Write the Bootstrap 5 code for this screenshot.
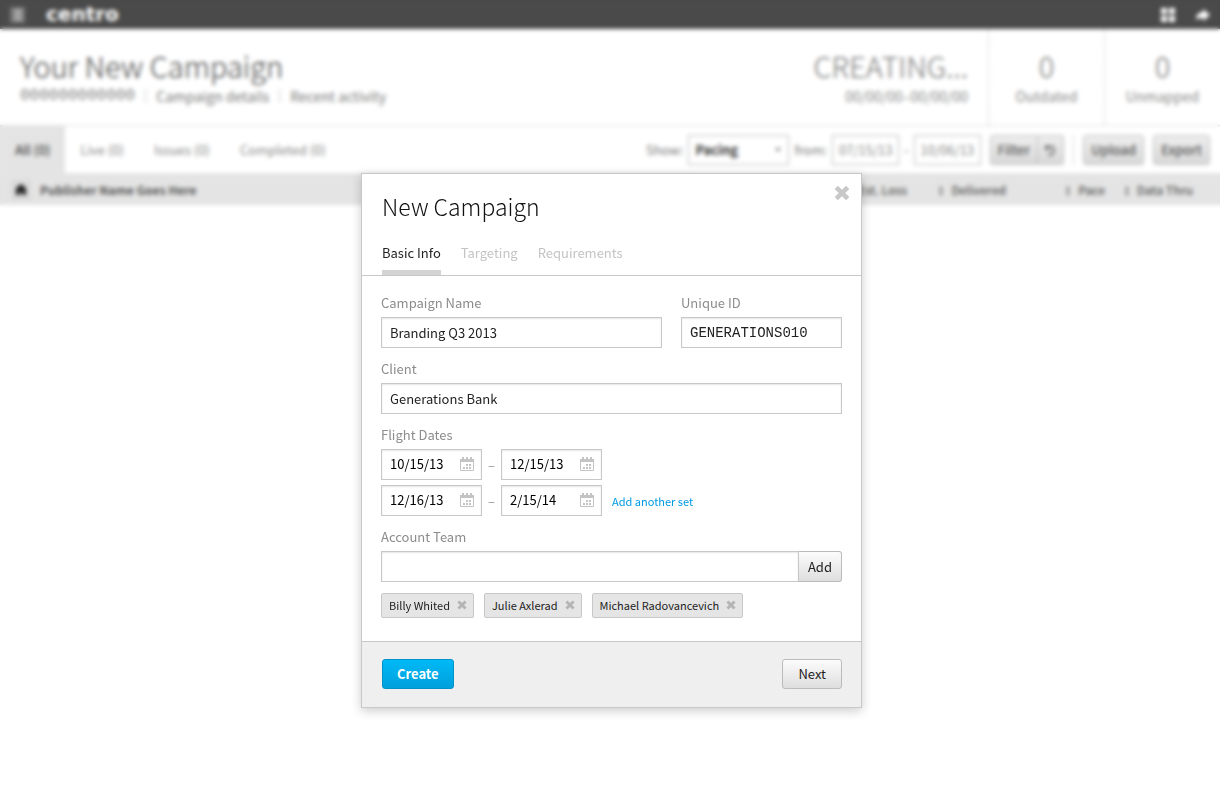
<!DOCTYPE html>
<html lang="en">
<head>
<meta charset="utf-8">
<meta name="viewport" content="width=device-width, initial-scale=1">
<title>New Campaign – centro</title>
<link href="https://cdn.jsdelivr.net/npm/bootstrap@5.3.0/dist/css/bootstrap.min.css" rel="stylesheet">
<style>
  body { font-family: "Noto Sans CJK SC", "Open Sans", sans-serif; font-size: 13px; line-height: 20px; color: #222; background: #fff; }
  button, input, select { font-family: inherit; }
  svg { display: block; flex: none; }

  /* Page behind the dialog */
  .topbar { height: 29px; background: #4a4a4a; padding: 0 10px; color: #fff; gap: 21px; }
  .brand { font: bold 20px/29px "DejaVu Sans", sans-serif; color: #fff; text-decoration: none; }
  .topbar button { background: none; border: 0; padding: 0; color: #fff; }
  .topbar .tools { gap: 20px; }
  .page-head { border-bottom: 1px dashed #ccc; min-height: 97px; }
  .head-main { padding: 18px 20px 0; }
  .big { font-size: 29px; line-height: 36px; font-weight: 300; color: #444; margin: 0; }
  .big.pale { color: #777; }
  .sub { font-size: 14px; line-height: 26px; color: #888; font-weight: 400; }
  .sub .strong { font-weight: 500; }
  .sub a { color: #777; text-decoration: none; }
  .sub .code { font-family: "Liberation Mono", monospace; font-size: 16px; line-height: 26px; }
  .sub a + a, .sub .code + a { border-left: 1px solid #ccc; padding-left: 10px; }
  .sub a, .sub .code { padding-right: 10px; }
  .stat { width: 116px; padding-top: 18px; border-left: 1px dashed #ccc; text-align: center; }
  .toolbar { min-height: 47px; padding-right: 10px; }
  .toolbar .tab { display: flex; align-items: center; padding: 0 15px; height: 47px; color: #888; text-decoration: none; }
  .toolbar .tab.active { background: #e4e4e4; color: #444; font-weight: 500; }
  .toolbar form { gap: 5px; color: #777; }
  .ctl { height: 30px; font-size: 13px; border: 1px solid #bbb; background: #fff; padding: 0 6px; }
  .ctl.date { width: 67px; color: #888; }
  .ctl.pick { width: 101px; color: #333; font-weight: 700; appearance: none; }
  .pick-wrap svg { position: absolute; right: 8px; top: 13px; }
  .toolbar .pushbtn { padding: 0 7px; font-weight: 500; color: #555; background: linear-gradient(#eee, #d8d8d8); }
  .grid-head { font-size: 12px; background: #e4e4e4; }
  .grid-head th { font-weight: 500; height: 32px; color: #555; text-align: right; padding: 1px 0 0; white-space: nowrap; }
  .grid-head th:first-child { text-align: left; padding-left: 11px; font-weight: 700; }
  .grid-head th:last-child { width: 115px; padding-right: 27px; }
  .grid-head .home { background: #dadada; padding: 3px; margin-right: 9px; }
  .w-col { width: 99px; }

  /* Shared push button */
  .pushbtn { height: 30px; border: 1px solid #bbb; border-radius: 3px; background: linear-gradient(#fcfcfc, #dedede); color: #222; font-size: 13px; font-weight: 400; line-height: 20px; padding: 0 15px; }
  .pushbtn.primary { color: #fff; font-weight: 700; padding: 0 14px; border-color: #0093c9; background: linear-gradient(#00b9f7, #00a0db); }
  .pushbtn.add { height: 31px; padding: 0 9px; border-left: 0; border-radius: 0 3px 3px 0; }

  /* Dialog */
  .veil { backdrop-filter: blur(2px); padding-left: 3px; }
  .veil .modal-dialog { max-width: 501px; margin: 173px auto 24px; }
  .veil .modal-content { border: 1px solid #c8c8c8; border-radius: 0; box-shadow: 0 3px 10px rgba(0, 0, 0, .2); color: #222; }
  .dlg-head { padding: 14px 20px 0; border-bottom: 1px solid #c8c8c8; }
  .dlg-title { font-size: 23px; line-height: 36px; font-weight: 300; margin: 0 0 19px; color: #111; }
  .close-x { position: absolute; right: 11px; top: 11px; border: 0; background: none; padding: 0; color: #c8c8c8; }
  .steps { gap: 20px; }
  .steps a { color: #c4c4c4; text-decoration: none; height: 32px; line-height: 20px; border-bottom: 5px solid transparent; }
  .steps a.active { color: #222; border-bottom-color: #d4d4d4; }
  .dlg-body { padding: 17px 19px 23px; }
  .group { margin-bottom: 11px; }
  .two-up { gap: 19px; }
  .cap { display: block; color: #8c8c8c; font-size: 13px; line-height: 20px; margin: 0 0 4px; padding: 0; float: none; width: auto; }
  .field { height: 31px; border: 1px solid #c8c8c8; background: #fff; box-shadow: inset 0 1px 2px rgba(0, 0, 0, .1); padding: 0 8px 1px; font-size: 13px; color: #222; border-radius: 0; }
  .field.mono { font-family: "Liberation Mono", monospace; font-size: 14px; padding-bottom: 0; }
  .uid { width: 161px; }
  .dates { display: grid; gap: 5px; }
  .datebox { width: 101px; padding-right: 7px; }
  .datebox input { border: 0; background: none; padding: 0; width: 66px; color: #000; outline: 0; }
  .dash { width: 19px; text-align: center; color: #999; }
  .small-link { font-size: 11px; color: #0099e5; text-decoration: none; margin-left: 10px; }
  .people { gap: 10px; }
  .person { height: 25px; border: 1px solid #c8c8c8; border-radius: 2px; background: #e5e5e5; font-size: 11px; padding: 0 6px 1px 7px; gap: 7px; }
  .person button { border: 0; background: none; padding: 0; color: #b4b4b4; }
  .dlg-foot { background: #efefef; border-top: 1px solid #c8c8c8; padding: 17px 19px 18px 20px; }
</style>
</head>
<body>
<svg width="0" height="0" class="position-absolute" aria-hidden="true">
  <symbol id="i-x" viewBox="0 0 14 14"><path d="M2 2l10 10M12 2L2 12" stroke="currentColor" stroke-width="4" fill="none"/></symbol>
  <symbol id="i-cal" viewBox="0 0 14 14"><path d="M0.500 2.500h13v11h-13z" fill="none" stroke="#c4c4c4"/><path d="M0 2h14v3H0zM2 0h2v3H2zM6 0h2v3H6zM10 0h2v3h-2z" fill="#c4c4c4"/><path d="M6 7h2v2H6zM9 7h2v2H9zM3 10h2v2H3zM6 10h2v2H6zM9 10h2v2H9z" fill="#c4c4c4"/></symbol>
  <symbol id="i-sort" viewBox="0 0 4 10"><path d="M2 0l2 4H0zM2 10l2-4H0z" fill="#666"/></symbol>
</svg>

<header class="topbar d-flex align-items-center">
  <button type="button" aria-label="Menu"><svg width="15" height="16" viewBox="0 0 15 16"><rect width="15" height="16" fill="#777"/><path d="M4 4h8M4 8h8M4 12h8" stroke="#ccc" stroke-width="2"/></svg></button>
  <a class="brand" href="#">centro</a>
  <div class="tools d-flex align-items-center ms-auto">
    <button type="button" aria-label="Apps"><svg width="16" height="16" viewBox="0 0 16 16" fill="#fff"><path d="M1 1h6v6H1zM9 1h6v6H9zM1 9h6v6H1zM9 9h6v6H9z"/></svg></button>
    <button type="button" aria-label="Share"><svg width="14" height="12" viewBox="0 0 14 12" fill="#fff"><path d="M0 11c0-6 4-8 7-8V0l7 6-7 6V9C4 9 2 9 0 11z"/></svg></button>
  </div>
</header>

<main>
  <section class="page-head d-flex">
    <div class="head-main">
      <h1 class="big">Your New Campaign</h1>
      <div class="sub d-flex align-items-center">
        <span class="code">000000000000</span><a href="#" class="lh-1">Campaign details</a><a href="#" class="lh-1">Recent activity</a>
      </div>
    </div>
    <div class="head-main ms-auto text-end">
      <p class="big pale">CREATING...</p>
      <div class="sub strong">00/00/00–00/00/00</div>
    </div>
    <div class="stat"><p class="big pale">0</p><div class="sub strong">Outdated</div></div>
    <div class="stat"><p class="big pale">0</p><div class="sub strong">Unmapped</div></div>
  </section>

  <section class="toolbar d-flex align-items-center">
    <nav class="d-flex">
      <a class="tab active" href="#">All (0)</a><a class="tab" href="#">Live (0)</a><a class="tab" href="#">Issues (0)</a><a class="tab" href="#">Completed (0)</a>
    </nav>
    <form class="d-flex align-items-center ms-auto" onsubmit="return false">
      <label for="show">Show:</label>
      <div class="pick-wrap position-relative"><select id="show" class="ctl pick"><option>Pacing</option></select><svg width="6" height="4" viewBox="0 0 6 4"><path d="M0 0h6L3 4z" fill="#888"/></svg></div>
      <label for="from">from:</label>
      <input id="from" class="ctl date" value="07/15/13"><span>-</span><input aria-label="To" class="ctl date" value="10/06/13">
      <div class="btn-group ms-1"><button class="pushbtn rounded-end-0" type="button">Filter</button><button class="pushbtn rounded-start-0 border-start-0" type="button" aria-label="Reset"><svg width="11" height="12" viewBox="0 0 11 12" fill="none" stroke="#777" stroke-width="2"><path d="M1 1v4h4M1 4c3-3 8-2 8 2s-3 5-6 5"/></svg></button></div>
      <span class="vr mx-1"></span>
      <button class="pushbtn me-1" type="button">Upload</button><button class="pushbtn" type="button">Export</button>
    </form>
  </section>

  <table class="grid-head w-100">
    <thead><tr>
      <th scope="col"><span class="d-flex align-items-center"><svg class="home" width="20" height="20" viewBox="0 0 14 14"><path d="M7 1l5 4v7H8V9H6v3H2V5z" fill="#222"/></svg><span>Publisher Name Goes Here</span></span></th>
      <th scope="col" class="w-col">Est. Loss</th>
      <th scope="col" class="w-col"><svg class="d-inline-block me-2" width="4" height="10"><use href="#i-sort"/></svg>Delivered</th>
      <th scope="col" class="w-col"><svg class="d-inline-block me-2" width="4" height="10"><use href="#i-sort"/></svg>Pace</th>
      <th scope="col"><svg class="d-inline-block me-2" width="4" height="10"><use href="#i-sort"/></svg>Data Thru</th>
    </tr></thead>
  </table>
</main>

<div class="modal d-block veil" role="dialog" aria-modal="true" aria-labelledby="dlg-title">
  <div class="modal-dialog">
    <form class="modal-content" onsubmit="return false">
      <div class="dlg-head">
        <h2 class="dlg-title" id="dlg-title">New Campaign</h2>
        <button type="button" class="close-x" aria-label="Close"><svg width="16" height="16"><use href="#i-x"/></svg></button>
        <nav class="steps d-flex"><a class="active" href="#">Basic Info</a><a href="#">Targeting</a><a href="#">Requirements</a></nav>
      </div>
      <div class="dlg-body">
        <div class="d-flex group two-up">
          <div class="flex-grow-1"><label class="cap" for="cname">Campaign Name</label><input id="cname" class="field w-100" value="Branding Q3 2013"></div>
          <div class="uid"><label class="cap" for="uid">Unique ID</label><input id="uid" class="field mono w-100" value="GENERATIONS010"></div>
        </div>
        <div class="group"><label class="cap" for="client">Client</label><input id="client" class="field w-100" value="Generations Bank"></div>
        <fieldset class="group">
          <legend class="cap">Flight Dates</legend>
          <div class="dates">
            <div class="d-flex align-items-center">
              <div class="field datebox d-flex align-items-center justify-content-between"><input aria-label="First start" value="10/15/13"><svg width="14" height="14"><use href="#i-cal"/></svg></div>
              <span class="dash">–</span>
              <div class="field datebox d-flex align-items-center justify-content-between"><input aria-label="First end" value="12/15/13"><svg width="14" height="14"><use href="#i-cal"/></svg></div>
            </div>
            <div class="d-flex align-items-center">
              <div class="field datebox d-flex align-items-center justify-content-between"><input aria-label="Second start" value="12/16/13"><svg width="14" height="14"><use href="#i-cal"/></svg></div>
              <span class="dash">–</span>
              <div class="field datebox d-flex align-items-center justify-content-between"><input aria-label="Second end" value="2/15/14"><svg width="14" height="14"><use href="#i-cal"/></svg></div>
              <a class="small-link" href="#">Add another set</a>
            </div>
          </div>
        </fieldset>
        <div class="group">
          <label class="cap" for="team">Account Team</label>
          <div class="d-flex"><input id="team" class="field flex-grow-1"><button type="button" class="pushbtn add">Add</button></div>
        </div>
        <div class="d-flex people">
          <span class="person d-flex align-items-center">Billy Whited<button type="button" aria-label="Remove Billy Whited"><svg width="10" height="10"><use href="#i-x"/></svg></button></span>
          <span class="person d-flex align-items-center">Julie Axlerad<button type="button" aria-label="Remove Julie Axlerad"><svg width="10" height="10"><use href="#i-x"/></svg></button></span>
          <span class="person d-flex align-items-center">Michael Radovancevich<button type="button" aria-label="Remove Michael Radovancevich"><svg width="10" height="10"><use href="#i-x"/></svg></button></span>
        </div>
      </div>
      <div class="dlg-foot d-flex justify-content-between">
        <button type="submit" class="pushbtn primary">Create</button>
        <button type="button" class="pushbtn">Next</button>
      </div>
    </form>
  </div>
</div>
<script src="https://cdn.jsdelivr.net/npm/bootstrap@5.3.0/dist/js/bootstrap.bundle.min.js"></script>
</body>
</html>
